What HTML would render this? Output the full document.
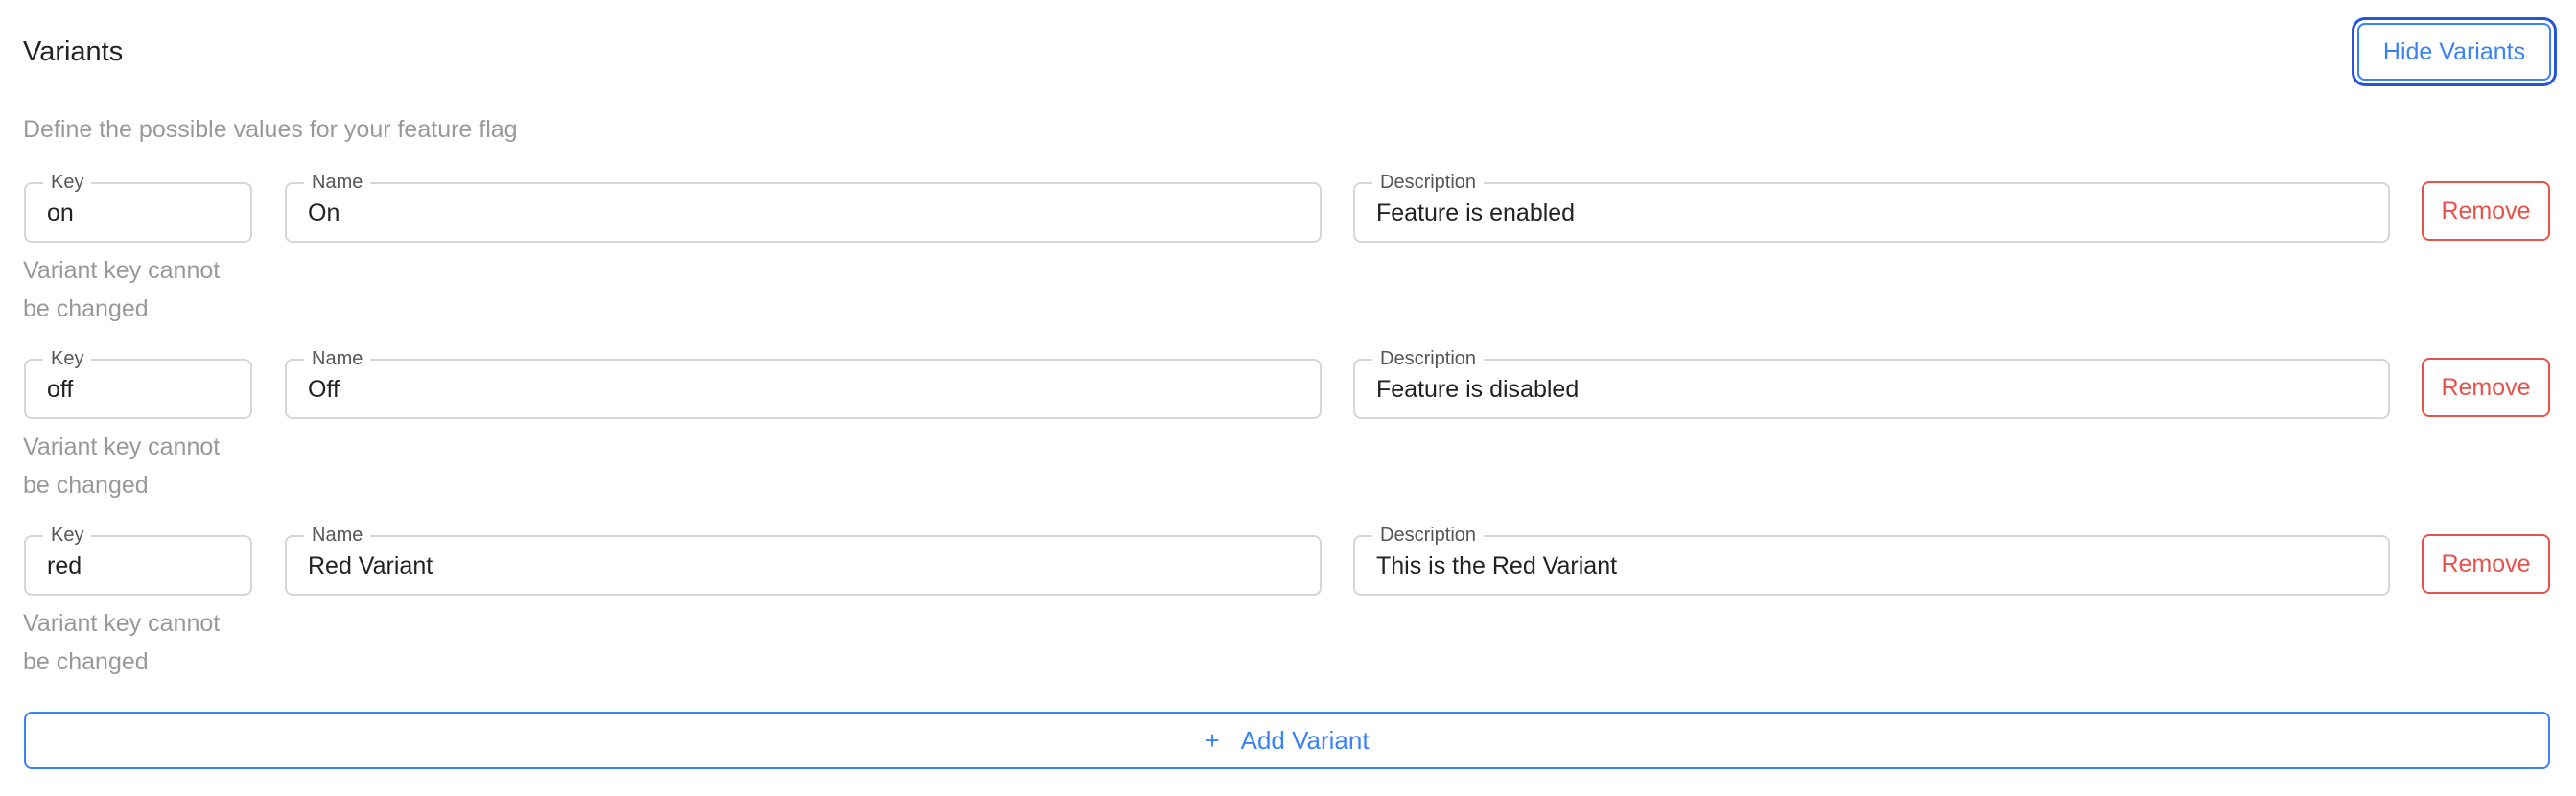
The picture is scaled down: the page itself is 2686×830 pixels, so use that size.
<!DOCTYPE html>
<html><head><meta charset="utf-8"><style>
*{box-sizing:border-box;margin:0;padding:0}
body{width:2686px;height:830px;background:#fff;font-family:"Liberation Sans",sans-serif;position:relative;overflow:hidden;color:#222}
.a{position:absolute}
.title{left:24px;top:38px;font-size:29px;color:#222}
.hide{left:2458px;top:24px;width:202px;height:60px;border:2px solid #3b82f6;border-radius:8px;color:#3b82f6;font-size:25px;display:flex;align-items:center;justify-content:center;box-shadow:0 0 0 3px #fff,0 0 0 6px #2656d6}
.desc{left:24px;top:121px;font-size:25px;color:#999}
.box{border:2px solid #d6d6d6;border-radius:8px;height:63px;font-size:25px;display:flex;align-items:center;padding-left:22px;padding-top:2px;color:#222}
.lab{position:absolute;top:-14px;left:18px;background:#fff;padding:0 8px;font-size:20px;color:#555;line-height:24px}
.rm{border:2px solid #e5534b;border-radius:8px;color:#e5534b;font-size:25px;display:flex;align-items:center;justify-content:center;width:134px;height:62px;left:2525px}
.help{left:24px;font-size:25px;color:#999;line-height:40px}
.add{left:25px;top:742px;width:2634px;height:60px;border:2px solid #3b82f6;border-radius:8px;color:#3b82f6;font-size:26px;display:flex;align-items:center;justify-content:center}
</style></head><body>
<div class="a title">Variants</div>
<div class="a hide">Hide Variants</div>
<div class="a desc">Define the possible values for your feature flag</div>

<div class="a box" style="left:25px;top:190px;width:238px"><span class="lab">Key</span>on</div>
<div class="a box" style="left:297px;top:190px;width:1081px"><span class="lab">Name</span>On</div>
<div class="a box" style="left:1411px;top:190px;width:1081px"><span class="lab">Description</span>Feature is enabled</div>
<div class="a rm" style="top:189px">Remove</div>
<div class="a help" style="top:262px">Variant key cannot<br>be changed</div>

<div class="a box" style="left:25px;top:374px;width:238px"><span class="lab">Key</span>off</div>
<div class="a box" style="left:297px;top:374px;width:1081px"><span class="lab">Name</span>Off</div>
<div class="a box" style="left:1411px;top:374px;width:1081px"><span class="lab">Description</span>Feature is disabled</div>
<div class="a rm" style="top:373px">Remove</div>
<div class="a help" style="top:446px">Variant key cannot<br>be changed</div>

<div class="a box" style="left:25px;top:558px;width:238px"><span class="lab">Key</span>red</div>
<div class="a box" style="left:297px;top:558px;width:1081px"><span class="lab">Name</span>Red Variant</div>
<div class="a box" style="left:1411px;top:558px;width:1081px"><span class="lab">Description</span>This is the Red Variant</div>
<div class="a rm" style="top:557px">Remove</div>
<div class="a help" style="top:630px">Variant key cannot<br>be changed</div>

<div class="a add"><span style="margin-right:22px">+</span>Add Variant</div>
</body></html>
